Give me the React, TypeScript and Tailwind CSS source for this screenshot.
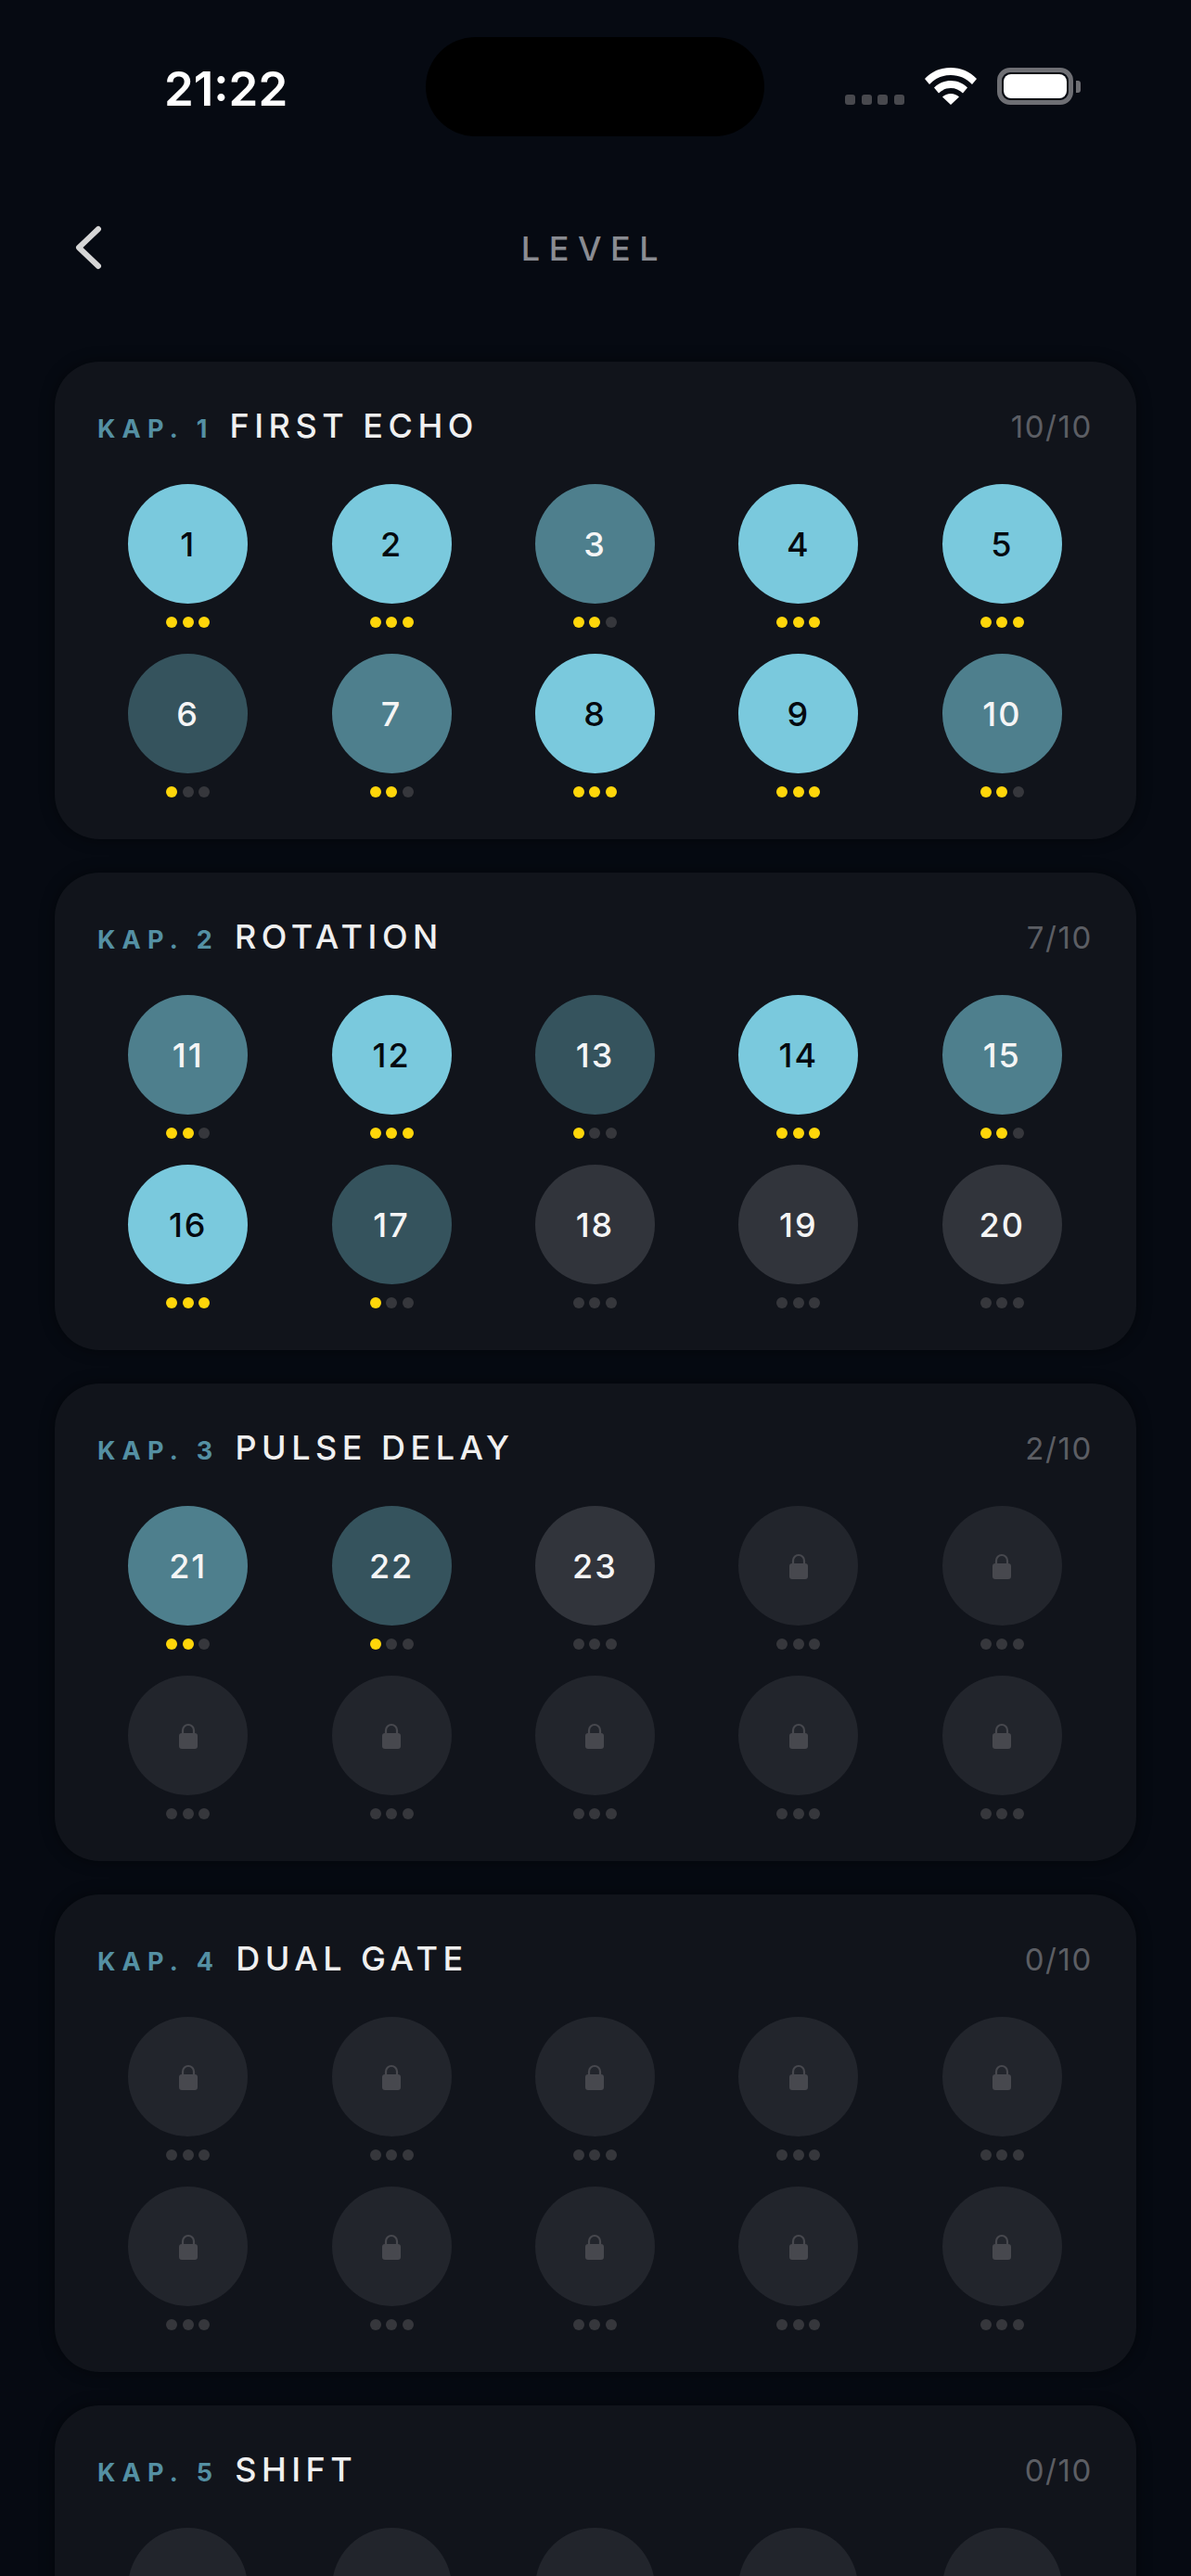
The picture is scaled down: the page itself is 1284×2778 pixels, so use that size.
/**
 * Level select screen: status bar, header and chapter cards with level grids.
 */
const font = { fontFamily: 'Inter, "Noto Sans", sans-serif' };

interface Chapter {
  num: number;
  title: string;
  progress: string;
  /** Stars per unlocked level, starting at the chapter's first level */
  stars: number[];
}

const chapters: Chapter[] = [
  { num: 1, title: 'FIRST ECHO', progress: '10/10', stars: [3, 3, 2, 3, 3, 1, 2, 3, 3, 2] },
  { num: 2, title: 'ROTATION', progress: '7/10', stars: [2, 3, 1, 3, 2, 3, 1, 0, 0, 0] },
  { num: 3, title: 'PULSE DELAY', progress: '2/10', stars: [2, 1, 0] },
  { num: 4, title: 'DUAL GATE', progress: '0/10', stars: [] },
  { num: 5, title: 'SHIFT', progress: '0/10', stars: [] },
];

const circleByStars: Record<number, string> = {
  3: 'bg-[#7ac9dd] text-[#05090f]',
  2: 'bg-[#4e7f8d] text-[#f5f5f5]',
  1: 'bg-[#35535d] text-[#f5f5f5]',
  0: 'bg-[#31343b] text-[#f5f5f5]',
};

function LockIcon() {
  return (
    <svg width="20" height="28" viewBox="0 0 20 28" fill="none">
      <path d="M4 12V8a6 6 0 0 1 12 0v4" stroke="#47484e" strokeWidth="2.2" />
      <rect x="0" y="11" width="20" height="17" rx="3" fill="#47484e" />
    </svg>
  );
}

function Dots({ stars }: { stars: number }) {
  return (
    <div className="mt-[14px] flex gap-[5.5px]">
      {[0, 1, 2].map((i) => (
        <div
          key={i}
          className={`h-3 w-3 rounded-full ${i < stars ? 'bg-[#ffd60a]' : 'bg-[#36373c]'}`}
        />
      ))}
    </div>
  );
}

function LevelCell({ level, stars }: { level: number; stars?: number }) {
  const locked = stars === undefined;
  return (
    <div className="flex flex-col items-center">
      <div
        className={`flex h-[129px] w-[129px] items-center justify-center rounded-full text-[36px] font-medium tracking-[2px] ${
          locked ? 'bg-[#22252c]' : circleByStars[stars]
        }`}
      >
        {locked ? <LockIcon /> : level}
      </div>
      <Dots stars={stars ?? 0} />
    </div>
  );
}

function ChapterCard({ chapter }: { chapter: Chapter }) {
  const first = (chapter.num - 1) * 10 + 1;
  return (
    <section className="h-[515px] rounded-[48px] bg-[#11141b] pt-[42px] shadow-[0_0_16px_rgba(0,0,0,0.45)]">
      <div className="flex items-baseline justify-between pl-[46px] pr-[47px]">
        <div className="flex items-baseline gap-[17px]">
          <span className="text-[27px] font-bold tracking-[7.2px] text-[#5490a3]">
            KAP. {chapter.num}
          </span>
          <span className="text-[36px] font-medium tracking-[5.5px] text-[#f0f0f0]">
            {chapter.title}
          </span>
        </div>
        <span className="text-[33px] tracking-[1.6px] text-[#5c5e64]">{chapter.progress}</span>
      </div>
      <div className="mt-[36px] grid grid-cols-5 gap-y-[28px] pl-[34px] pr-[35px]">
        {Array.from({ length: 10 }, (_, i) => (
          <LevelCell key={i} level={first + i} stars={chapter.stars[i]} />
        ))}
      </div>
    </section>
  );
}

function StatusBar() {
  return (
    <div className="flex h-[147px] items-start pt-[40px]">
      <div className="w-[459px] pl-[177px] pt-[26px] text-[51px] font-semibold leading-[60px] text-white">
        21:22
      </div>
      <div className="h-[107px] w-[365px] rounded-[54px] bg-black" />
      <div className="ml-[87px] mt-[33px] flex items-end">
        <div className="flex gap-[6.5px]">
          {[0, 1, 2, 3].map((i) => (
            <div key={i} className="h-[11px] w-[11px] rounded-[3px] bg-[#48494e]" />
          ))}
        </div>
        <svg className="ml-[22px]" width="56" height="40" viewBox="0 0 56 40" fill="white">
          <path d="M28 0C17 0 7.500 4 0 12l5 6c6-6.500 14-10 23-10s17 3.500 23 10l5-6C48.500 4 39 0 28 0Z" />
          <path d="M28 14c-7 0-13 2.700-18 7.500l5 6c3.500-3.500 8-5.500 13-5.500s9.500 2 13 5.500l5-6C41 16.700 35 14 28 14Z" />
          <path d="M28 28c-3.500 0-6.500 1.200-9 3.500L28 40l9-8.500c-2.500-2.300-5.500-3.500-9-3.500Z" />
        </svg>
        <div className="ml-[22px] flex items-center">
          <div className="h-[40px] w-[82px] rounded-[14px] border-[5px] border-[#6e6f74] p-[2px]">
            <div className="h-full w-full rounded-[8px] bg-white" />
          </div>
          <div className="ml-[3px] h-[13px] w-[5px] rounded-r-[3px] bg-[#6e6f74]" />
        </div>
      </div>
    </div>
  );
}

export default function App() {
  return (
    <div className="h-[2778px] w-[1284px] overflow-hidden bg-[#060a12]" style={font}>
      <StatusBar />
      <header className="relative mt-[90px] flex h-[60px] items-center justify-center">
        <svg
          className="absolute left-[78px] top-[6px]"
          width="34"
          height="48"
          viewBox="0 0 34 48"
          fill="none"
          stroke="#d6d6d6"
          strokeWidth="6"
          strokeLinecap="round"
          strokeLinejoin="round"
        >
          <path d="M28 4 7 24l21 20" />
        </svg>
        <h1 className="pr-[3px] pt-[1px] text-[36px] font-medium tracking-[9.6px] text-[#8a8c92]">LEVEL</h1>
      </header>
      <div className="mt-[93px] flex flex-col gap-[36px] px-[59px]">
        {chapters.map((c) => (
          <ChapterCard key={c.num} chapter={c} />
        ))}
      </div>
    </div>
  );
}
